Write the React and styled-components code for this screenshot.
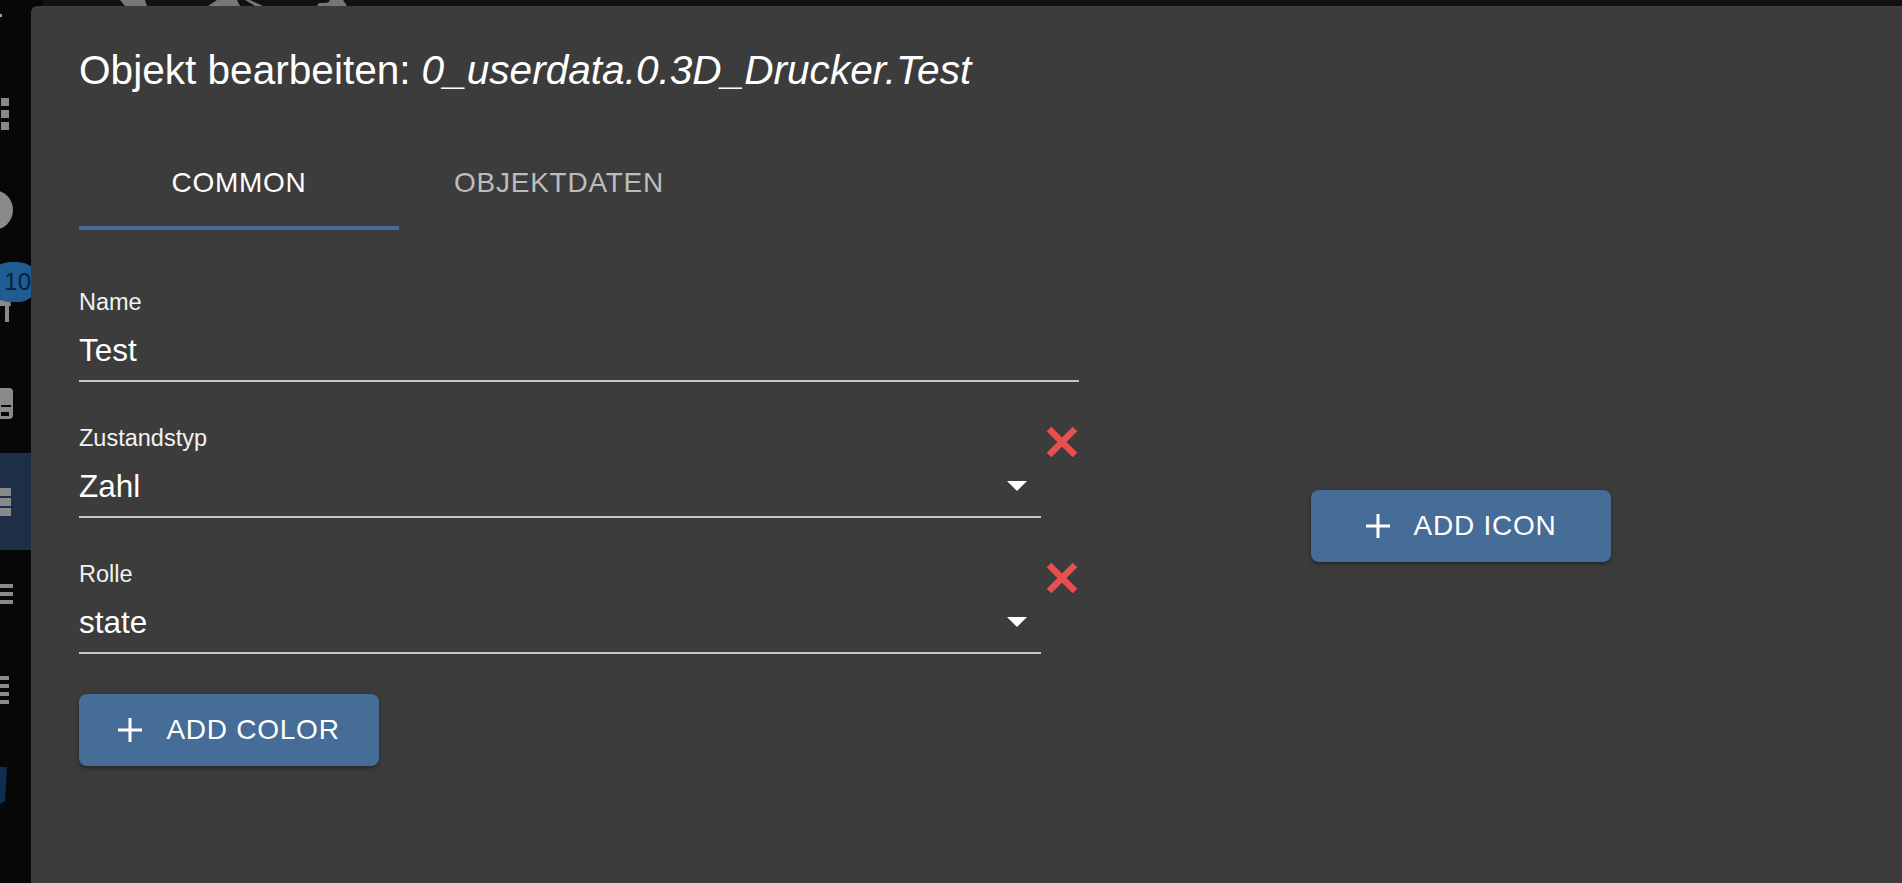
import React from 'react'
import styled, { createGlobalStyle } from 'styled-components'

const GlobalStyle = createGlobalStyle`
  html, body {
    margin: 0;
    height: 100%;
    overflow: hidden;
    background: #080808;
    font-family: "Liberation Sans", Arial, sans-serif;
  }
`

const Page = styled.div`
  position: relative;
  width: 1902px;
  height: 883px;
  overflow: hidden;
  display: flex;
`

const Sidebar = styled.nav`
  width: 43px;
  flex-shrink: 0;
  background: #070707;
  display: flex;
  flex-direction: column;
  padding-top: 14px;
  box-sizing: border-box;
`

const MenuDot = styled.div`
  width: 2px;
  height: 3px;
  margin-bottom: 49px;
  background: #9a9a9a;
`

const NavRow = styled.div`
  position: relative;
  height: ${({ $h }) => $h}px;
  display: flex;
  align-items: center;
  background: ${({ $active }) => ($active ? '#1e2e46' : 'transparent')};
`

const Badge = styled.span`
  position: absolute;
  left: -10px;
  top: 4px;
  width: 48px;
  height: 40px;
  border-radius: 20px;
  background: #1f5c92;
  color: #0b1f3a;
  font-size: 24px;
  line-height: 40px;
  text-align: right;
  box-sizing: border-box;
  padding-right: 7px;
`

const TopBar = styled.header`
  flex: 1;
  height: 6px;
  background: #111;
  padding-left: 75px;
`

const Dialog = styled.section`
  position: absolute;
  left: 31px;
  top: 6px;
  width: 1900px;
  height: 900px;
  box-sizing: border-box;
  padding: 0 48px;
  background: #3c3c3c;
  border-radius: 6px;
  color: #fff;
`

const Title = styled.h2`
  margin: 0;
  height: 128px;
  display: flex;
  align-items: center;
  gap: 11px;
  font-size: 40.6px;
  font-weight: 400;
  box-sizing: border-box;
  white-space: nowrap;
`

const ObjectId = styled.em`
  font-style: italic;
`

const Tabs = styled.div`
  display: flex;
  height: 96px;
`

const Tab = styled.div`
  width: 320px;
  height: 96px;
  box-sizing: border-box;
  padding-top: 5px;
  display: flex;
  align-items: center;
  justify-content: center;
  font-size: 28px;
  letter-spacing: 0.75px;
  color: ${({ $active }) => ($active ? '#fff' : '#bcbcbc')};
  border-bottom: 4px solid ${({ $active }) => ($active ? '#456d98' : 'transparent')};
`

const Body = styled.div`
  display: flex;
  align-items: center;
  margin-top: 60px;
`

const Form = styled.div`
  width: 1000px;
  flex-shrink: 0;
`

const IconColumn = styled.div`
  width: 764px;
  display: flex;
  justify-content: center;
  padding-bottom: 4px;
`

const FieldRow = styled.div`
  display: flex;
  align-items: flex-start;
  margin-bottom: ${({ $last }) => ($last ? 40 : 44)}px;
`

const Field = styled.div`
  flex: 1;
  height: 92px;
  box-sizing: border-box;
  border-bottom: 2px solid #c6c6c6;
  display: flex;
  flex-direction: column;
`

const Label = styled.label`
  font-size: 23.5px;
  line-height: 28px;
  margin-top: -2px;
  color: #f2f2f2;
`

const ValueRow = styled.div`
  display: flex;
  align-items: center;
  justify-content: space-between;
  margin-top: 15px;
  font-size: 31.5px;
  line-height: 38px;
  padding-right: 14px;
`

const RemoveButton = styled.button`
  width: 33px;
  height: 32px;
  margin: 0 0 0 5px;
  padding: 0;
  border: 0;
  background: none;
  display: block;
`

const ActionButton = styled.button`
  width: 300px;
  height: 72px;
  border: 0;
  border-radius: 8px;
  background: #456d98;
  color: #fff;
  font-family: inherit;
  font-size: 28px;
  letter-spacing: 0.75px;
  display: flex;
  align-items: center;
  justify-content: center;
  gap: 24px;
  box-shadow: 0 3px 3px -2px rgba(0, 0, 0, 0.2), 0 2px 4px rgba(0, 0, 0, 0.2), 0 1px 8px rgba(0, 0, 0, 0.12);
`

const Plus = () => (
  <svg width="24" height="24" viewBox="0 0 24 24" fill="#fff">
    <path d="M10.5 0h3v10.5H24v3H13.5V24h-3V13.5H0v-3h10.5z" />
  </svg>
)

const CloseIcon = () => (
  <svg width="32" height="32" viewBox="0 0 32 32" stroke="#ea4f4f" strokeWidth="6.5" fill="none" style={{ display: 'block' }}>
    <path d="M3 3L29 29M29 3L3 29" />
  </svg>
)

const ArrowDown = () => (
  <svg width="20" height="10" viewBox="0 0 20 10" fill="#fff">
    <path d="M0 0h20L10 10z" />
  </svg>
)

const GridIcon = () => (
  <svg width="9" height="32" viewBox="0 0 9 32" fill="#8a8a8a">
    <path d="M1 0h8v8H1zM1 12h8v8H1zM1 24h8v8H1z" />
  </svg>
)

const DotIcon = () => (
  <svg width="13" height="40" viewBox="0 0 13 40" fill="#8a8a8a">
    <circle cx="-7" cy="20" r="20" />
  </svg>
)

const PinIcon = () => (
  <svg width="11" height="32" viewBox="0 0 11 32" fill="#8a8a8a">
    <path d="M0 10h10l1 6H9v16H5V16H0z" />
  </svg>
)

const CardIcon = () => (
  <svg width="13" height="31" viewBox="0 0 13 31">
    <path d="M0 0h9a4 4 0 0 1 4 4v23a4 4 0 0 1-4 4H0z" fill="#8a8a8a" />
    <path d="M1 17h10v2H1zM1 24h8v4H1z" fill="#070707" />
  </svg>
)

const ListIcon = ({ width, rows, bar, gap }) => (
  <svg width={width} height={rows * bar + (rows - 1) * gap} fill="#8a8a8a">
    {Array.from({ length: rows }, (_, i) => (
      <rect key={i} x="0" y={i * (bar + gap)} width={width} height={bar} />
    ))}
  </svg>
)

const LogoIcon = () => (
  <svg width="7" height="37" viewBox="0 0 7 37" fill="#0e2f50">
    <path d="M0 0h7l-2 34-5 3z" />
  </svg>
)

const HeaderLogo = () => (
  <svg width="240" height="6" viewBox="0 0 240 6" fill="#777" style={{ display: 'block' }}>
    <path d="M2 0H27L29 6H7ZM90 6L99 0H119L122 6ZM127 0H132L145 6H137ZM199 6L201 3H207Q211 3 212 0H225L229 6Z" />
  </svg>
)

const AddButton = ({ children }) => (
  <ActionButton type="button">
    <Plus />
    {children}
  </ActionButton>
)

const SelectField = ({ label, value, last }) => (
  <FieldRow $last={last}>
    <Field>
      <Label>{label}</Label>
      <ValueRow>
        {value}
        <ArrowDown />
      </ValueRow>
    </Field>
    <RemoveButton type="button">
      <CloseIcon />
    </RemoveButton>
  </FieldRow>
)

export default function App() {
  return (
    <>
      <GlobalStyle />
      <Page>
        <Sidebar>
          <MenuDot />
          <NavRow $h={96}><GridIcon /></NavRow>
          <NavRow $h={96}><DotIcon /></NavRow>
          <NavRow $h={96}>
            <PinIcon />
            <Badge>10</Badge>
          </NavRow>
          <NavRow $h={99}><CardIcon /></NavRow>
          <NavRow $h={97} $active><ListIcon width={11} rows={3} bar={8} gap={2} /></NavRow>
          <NavRow $h={88}><ListIcon width={13} rows={3} bar={4} gap={4} /></NavRow>
          <NavRow $h={104}><ListIcon width={9} rows={4} bar={4} gap={4} /></NavRow>
          <NavRow $h={86}><LogoIcon /></NavRow>
        </Sidebar>
        <TopBar><HeaderLogo /></TopBar>
        <Dialog>
          <Title>
            Objekt bearbeiten:
            <ObjectId>0_userdata.0.3D_Drucker.Test</ObjectId>
          </Title>
          <Tabs>
            <Tab $active>COMMON</Tab>
            <Tab>OBJEKTDATEN</Tab>
          </Tabs>
          <Body>
            <Form>
              <FieldRow>
                <Field>
                  <Label>Name</Label>
                  <ValueRow>Test</ValueRow>
                </Field>
              </FieldRow>
              <SelectField label="Zustandstyp" value="Zahl" />
              <SelectField label="Rolle" value="state" last />
              <AddButton>ADD COLOR</AddButton>
            </Form>
            <IconColumn>
              <AddButton>ADD ICON</AddButton>
            </IconColumn>
          </Body>
        </Dialog>
      </Page>
    </>
  )
}
